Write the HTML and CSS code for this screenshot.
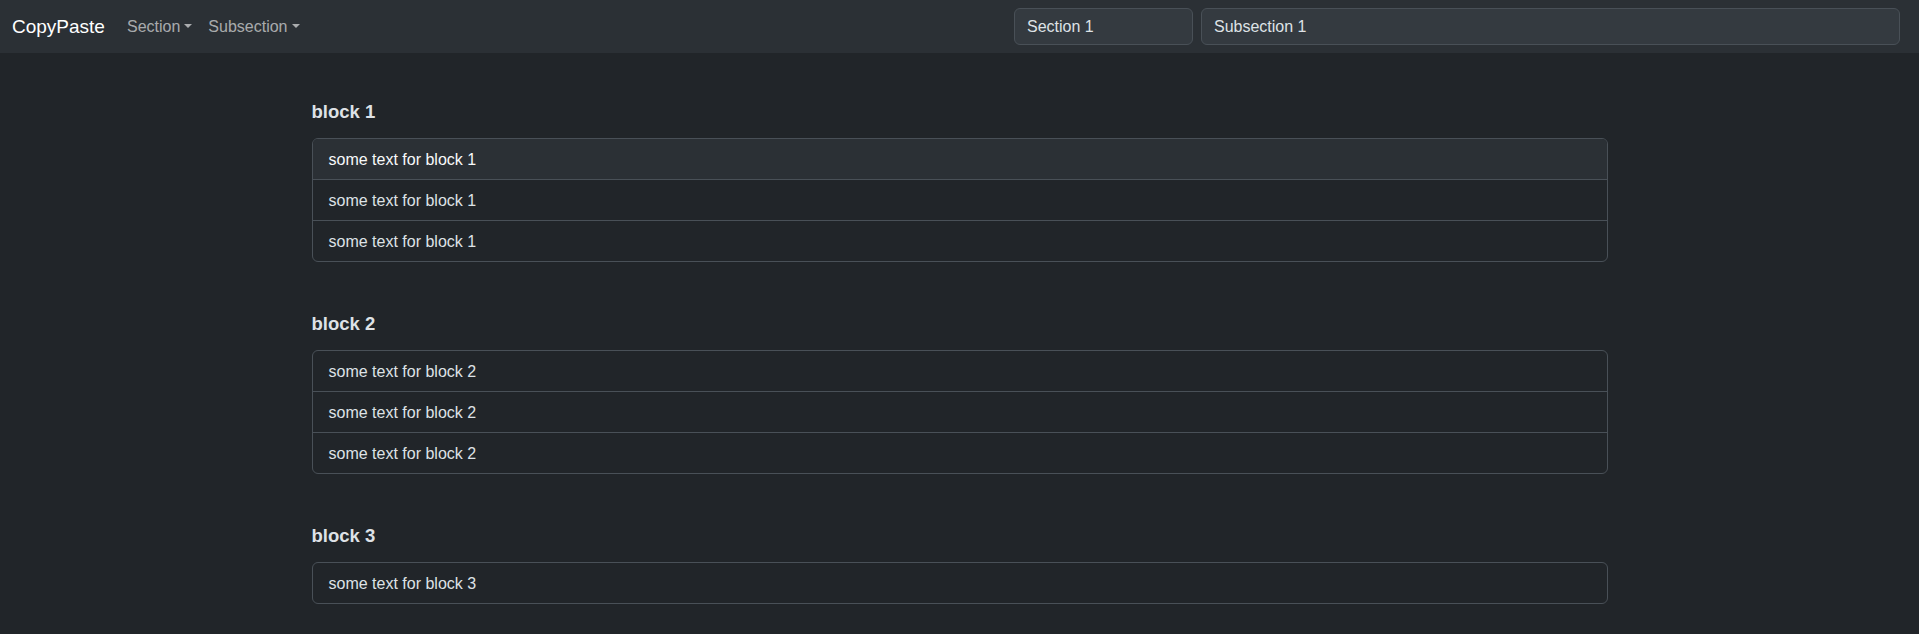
FILE: index.html
```html
<!DOCTYPE html>
<html lang="en">
<head>
<meta charset="utf-8">
<title>CopyPaste</title>
<link rel="stylesheet" href="styles.css">
</head>
<body>
<nav class="navbar">
  <a class="brand" href="#">CopyPaste</a>
  <ul class="nav">
    <li><a class="nav-link dropdown-toggle" href="#">Section</a></li>
    <li><a class="nav-link dropdown-toggle" href="#">Subsection</a></li>
  </ul>
  <form class="nav-form">
    <input class="form-control field-section" type="text" value="Section 1">
    <input class="form-control field-subsection" type="text" value="Subsection 1">
  </form>
</nav>
<main class="container">
  <section class="block">
    <h5 class="block-title">block 1</h5>
    <ul class="list-group">
      <li class="list-item list-item-active">some text for block 1</li>
      <li class="list-item">some text for block 1</li>
      <li class="list-item">some text for block 1</li>
    </ul>
  </section>
  <section class="block">
    <h5 class="block-title">block 2</h5>
    <ul class="list-group">
      <li class="list-item">some text for block 2</li>
      <li class="list-item">some text for block 2</li>
      <li class="list-item">some text for block 2</li>
    </ul>
  </section>
  <section class="block">
    <h5 class="block-title">block 3</h5>
    <ul class="list-group">
      <li class="list-item">some text for block 3</li>
    </ul>
  </section>
</main>
</body>
</html>
```
FILE: styles.css
```css
* {
  box-sizing: border-box;
}

html, body {
  margin: 0;
  padding: 0;
}

body {
  background: #212529;
  color: #dee2e6;
  font-family: "Liberation Sans", Arial, sans-serif;
  font-size: 16px;
  line-height: 1.5;
}

a {
  text-decoration: none;
}

.navbar {
  display: flex;
  align-items: center;
  height: 53px;
  padding: 0 19px 0 12px;
  background: #2b3035;
}

.brand {
  color: #ffffff;
  font-size: 19px;
  line-height: 30px;
  margin-right: 14px;
}

.nav {
  display: flex;
  list-style: none;
  margin: 0;
  padding: 0;
}

.nav-link {
  display: block;
  padding: 8px 8px;
  color: rgba(255, 255, 255, 0.6);
  font-size: 16px;
  line-height: 24px;
}

.dropdown-toggle::after {
  content: "";
  display: inline-block;
  margin-left: 4px;
  vertical-align: 4px;
  border-top: 4.8px solid;
  border-right: 4.8px solid transparent;
  border-left: 4.8px solid transparent;
  border-bottom: 0;
}

.nav-form {
  display: flex;
  gap: 8px;
  margin: 0 0 0 auto;
}

.form-control {
  display: block;
  height: 37px;
  padding: 6px 12px;
  font-family: inherit;
  font-size: 16px;
  line-height: 24px;
  color: #dee2e6;
  background: #343a40;
  border: 1px solid #495057;
  border-radius: 6px;
  outline: none;
}

.field-section {
  width: 179px;
}

.field-subsection {
  width: 699px;
}

.container {
  max-width: 1320px;
  margin: 0 auto;
  padding: 45px 12px 0;
}

.block + .block {
  margin-top: 48px;
}

.block-title {
  margin: 0 0 12px;
  font-size: 18.5px;
  font-weight: 700;
  line-height: 28px;
  color: #dee2e6;
}

.list-group {
  list-style: none;
  margin: 0;
  padding: 0;
  border: 1px solid #495057;
  border-radius: 6px;
  overflow: hidden;
}

.list-item {
  padding: 9px 16px 7px;
  line-height: 24px;
  color: #dee2e6;
}

.list-item + .list-item {
  border-top: 1px solid #495057;
}

.list-item-active {
  background: #2b3035;
  color: #f8f9fa;
}
```
